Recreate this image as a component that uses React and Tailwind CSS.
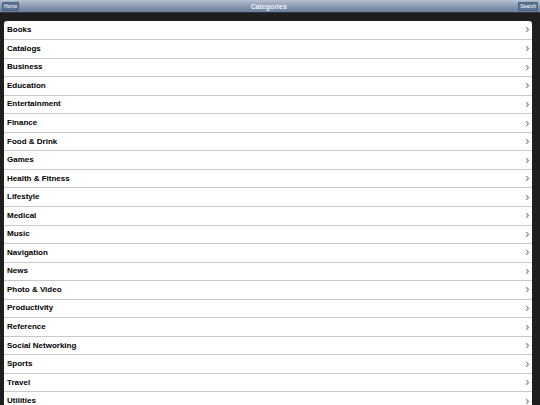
import React from "react";

const items = [
  "Books","Catalogs","Business","Education","Entertainment","Finance","Food & Drink","Games",
  "Health & Fitness","Lifestyle","Medical","Music","Navigation","News","Photo & Video",
  "Productivity","Reference","Social Networking","Sports","Travel","Utilities",
];

function Chevron() {
  return (
    <svg width="5" height="7" viewBox="0 0 5 7" className="shrink-0">
      <path d="M1.2 1.2 L3.5 3.5 L1.2 5.8" fill="none" stroke="#8c8c8c" strokeWidth="1.2" />
    </svg>
  );
}

export default function App() {
  return (
    <div className="w-[540px] h-[405px] overflow-hidden bg-[#1c1c1c] flex flex-col" style={{ fontFamily: '"Liberation Sans", Arial, sans-serif' }}>
      <div className="h-[13px] shrink-0 flex items-center justify-between px-[2px] bg-gradient-to-b from-[#b7c2d1] via-[#8a9bb3] to-[#6c819d] border-b border-[#2d3644]">
        <div className="h-[9px] px-[1px] flex items-center bg-[#5d7594] border border-[#4b5f7a] rounded-[1px] text-[5px] text-white leading-none">Home</div>
        <div className="text-[7px] text-[#eef1f5] font-bold leading-none">Categories</div>
        <div className="h-[9px] px-[1px] flex items-center bg-[#5d7594] border border-[#4b5f7a] rounded-[1px] text-[5px] text-white leading-none">Search</div>
      </div>
      <div className="flex-1 pt-[7.5px] px-[4px] pr-[8px] bg-[#1e1e1e]">
        <div className="bg-white rounded-t-[3px] overflow-hidden">
          {items.map((name, i) => (
            <div key={name} className={`h-[18.55px] flex items-center justify-between pl-[3px] pr-[2px] ${i > 0 ? "border-t border-[#c9c9c9]" : ""}`}>
              <span className="text-[8px] font-bold text-black leading-none">{name}</span>
              <Chevron />
            </div>
          ))}
        </div>
      </div>
    </div>
  );
}
